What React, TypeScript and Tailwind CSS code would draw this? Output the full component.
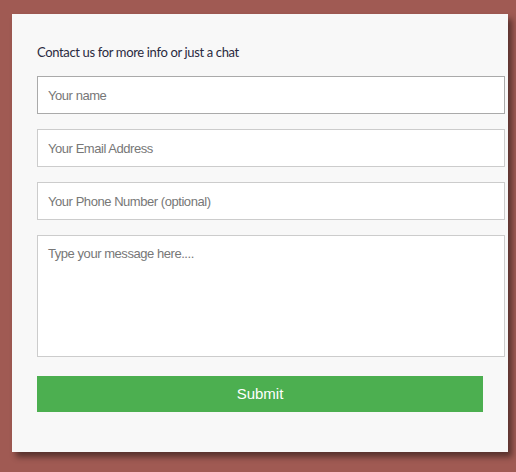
import React from "react";

export default function App() {
    return (
        <div className="w-[516px] h-[472px] bg-[#a05a53] pt-[14px] pl-[12px] overflow-hidden">
            <div className="w-[496px] h-[438px] bg-[#f8f8f8] shadow-[4px_5px_6px_rgba(0,0,0,0.45)] pt-[30px] px-[25px] box-border">
                <p className="text-[13px] leading-[16px] tracking-[-0.35px] text-[#2a2a40] font-['Lato','Open_Sans',sans-serif] mb-[16px]">
                    Contact us for more info or just a chat
                </p>

                <form className="flex flex-col font-['Liberation_Sans',Arial,sans-serif]">
                    <input
                        type="text"
                        placeholder="Your name"
                        className="w-[468px] h-[38px] px-[10px] bg-white border border-[#aaaaaa] text-[13px] tracking-[-0.45px] text-[#333] placeholder:text-[#777] outline-none mb-[15px]"
                    />
                    <input
                        type="email"
                        placeholder="Your Email Address"
                        className="w-[468px] h-[38px] px-[10px] bg-white border border-[#cccccc] text-[13px] tracking-[-0.45px] text-[#333] placeholder:text-[#777] outline-none mb-[15px]"
                    />
                    <input
                        type="text"
                        placeholder="Your Phone Number (optional)"
                        className="w-[468px] h-[38px] px-[10px] bg-white border border-[#cccccc] text-[13px] tracking-[-0.45px] text-[#333] placeholder:text-[#777] outline-none mb-[15px]"
                    />
                    <textarea
                        placeholder="Type your message here...."
                        className="w-[468px] h-[122px] px-[10px] py-[10px] bg-white border border-[#cccccc] text-[13px] tracking-[-0.45px] leading-[16px] text-[#333] placeholder:text-[#777] outline-none resize-none mb-[19px]"
                    />
                    <button
                        type="button"
                        className="w-[446px] h-[36px] bg-[#4caf50] text-white text-[15px]"
                    >
                        Submit
                    </button>
                </form>
            </div>
        </div>
    );
}
